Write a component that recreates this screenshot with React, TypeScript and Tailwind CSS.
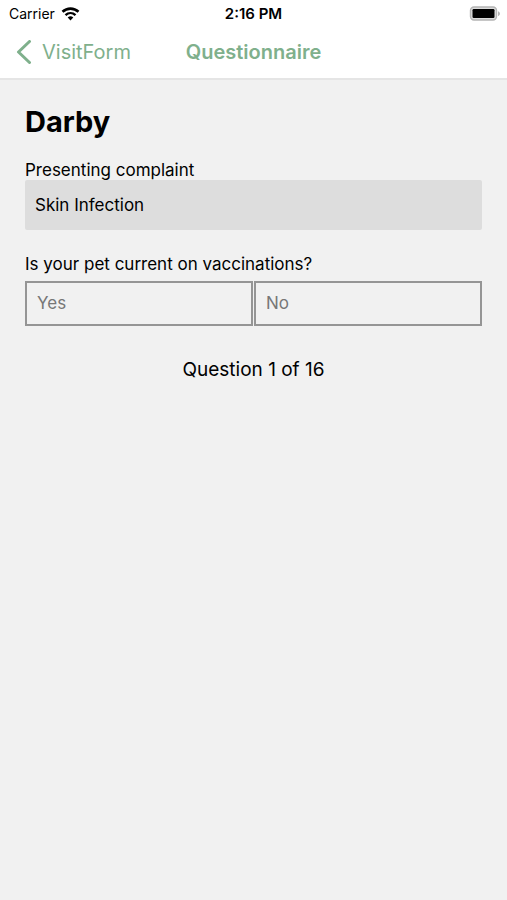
function StatusBar() {
  return (
    <div className="grid h-7 grid-cols-3 items-center px-2 text-sm text-black">
      <div className="flex items-center gap-1.5 pl-px">
        <span>Carrier</span>
        <svg width="19" height="14" viewBox="0 0 18 14" fill="none" role="img" aria-label="Wi-Fi">
          <path d="M1 4.8C5.6.5 12.4.5 17 4.8" stroke="#000" strokeWidth="2.6" />
          <path d="M4 8.1c2.9-2.7 7.1-2.7 10 0" stroke="#000" strokeWidth="2.4" />
          <path d="M6.2 10.5a4.1 4.1 0 0 1 5.6 0L9 13.4z" fill="#000" />
        </svg>
      </div>
      <span className="text-center text-[15px] font-semibold">2:16 PM</span>
      <svg className="justify-self-end" width="30" height="16" viewBox="0 0 30 16" overflow="visible" role="img" aria-label="Battery full">
        <rect x="1.5" y="1" width="26" height="13" rx="3.5" fill="#dcdcdc" stroke="#b4b4b4" strokeWidth="1.4" />
        <rect x="3.5" y="3" width="22" height="9" rx="1.2" fill="#000" />
        <path d="M29 5.2c2.6.8 2.6 4 0 4.8z" fill="#b4b4b4" />
      </svg>
    </div>
  );
}

function NavBar() {
  return (
    <nav className="grid grid-cols-[1fr_auto_1fr] items-center px-4 pt-2.5 pb-3 text-xl text-[#7fb08c]">
      <button type="button" className="flex h-7 items-center gap-2.5 justify-self-start">
        <svg width="16" height="24" viewBox="0 0 16 24" fill="none" aria-hidden="true">
          <path d="M13.5 1.5 2.5 12l11 10.5" stroke="currentColor" strokeWidth="3" strokeLinecap="round" strokeLinejoin="round" />
        </svg>
        VisitForm
      </button>
      <h1 className="font-semibold">Questionnaire</h1>
    </nav>
  );
}

const answers = ["Yes", "No"];

export default function App() {
  return (
    <div className="min-h-screen bg-[#f1f1f1] font-['Inter','Liberation_Sans',sans-serif] text-black">
      <header className="border-b-2 border-[#e5e5e5] bg-white">
        <StatusBar />
        <NavBar />
      </header>
      <main className="px-[25px] pt-6">
        <h2 className="text-[29px] leading-9 font-bold">Darby</h2>
        <label htmlFor="complaint" className="mt-5 block text-[17px] leading-5">
          Presenting complaint
        </label>
        <input
          id="complaint"
          readOnly
          defaultValue="Skin Infection"
          className="block h-[50px] w-full rounded-xs bg-[#dddddd] px-2.5 text-[17px] outline-none"
        />
        <p id="question" className="mt-6 text-[17px] leading-5">
          Is your pet current on vaccinations?
        </p>
        <div role="group" aria-labelledby="question" className="mt-[7px] grid grid-cols-2 gap-px">
          {answers.map((answer) => (
            <button
              key={answer}
              type="button"
              className="h-[45px] border-2 border-[#959595] px-2.5 text-left text-[17px] text-[#777777]"
            >
              {answer}
            </button>
          ))}
        </div>
        <p className="mt-7 text-center text-[19px] leading-8">Question 1 of 16</p>
      </main>
    </div>
  );
}
